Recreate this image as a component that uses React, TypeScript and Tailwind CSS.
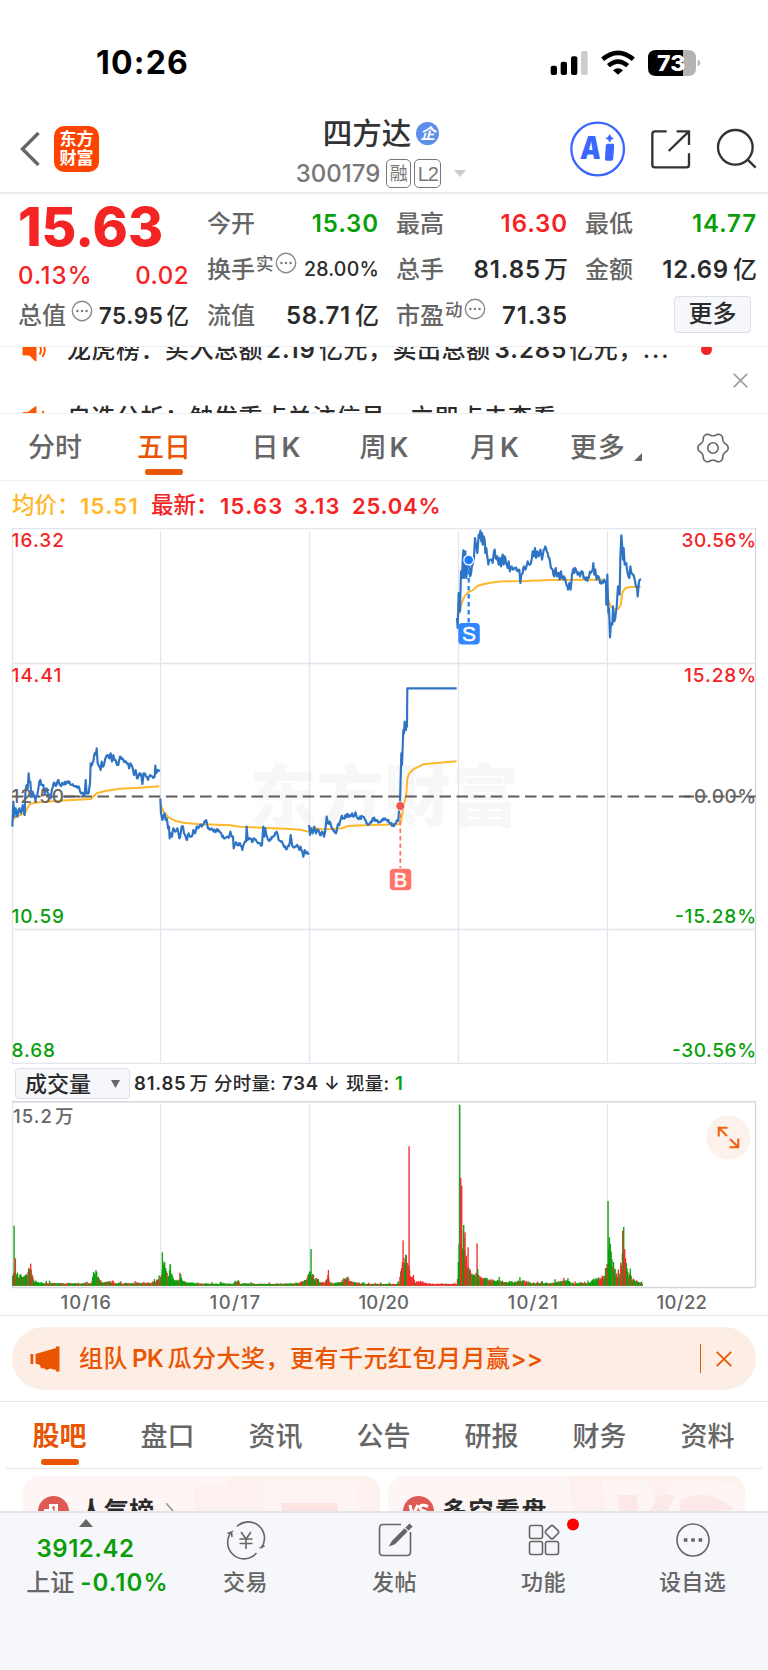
import type { ReactNode } from "react";

type Pt = [number, number];

const parse = (s: string): Pt[] =>
  s.trim().split(/\s+/).map((p) => p.split(",").map(Number) as Pt);

const makeRandom = (seed: number) => () => {
  seed = (seed * 1664525 + 1013904223) % 4294967296;
  return seed / 4294967296;
};

/* Price series: one string of x,y pairs per trading day, in thirds of a pixel. */
const priceDays = [
  "37,1040 40,965 43,1010 47,985 52,1010 58,985 63,1000 68,975 74,1005 76,940 80,915 83,925 86,880 88,905 91,905 94,950 98,935 102,945 106,960 112,945 118,905 121,900 124,915 130,915 134,940 140,925 146,945 152,955 157,925 163,908 167,918 172,905 175,900 180,915 190,912 200,908 208,905 216,915 228,920 238,925 243,940 250,945 254,945 257,900 260,940 266,940 270,910 272,850 276,855 280,845 284,820 288,825 290,805 293,850 298,860 302,870 305,845 309,860 313,850 316,835 323,825 328,835 332,820 336,845 340,825 343,840 355,855 360,830 370,840 378,845 383,850 387,865 391,850 398,865 402,885 407,870 411,895 418,880 424,885 427,912 431,880 440,890 444,900 450,885 458,890 464,890 466,857 468,880 475,870 479,870",
  "481,955 483,1000 487,1020 490,1010 494,1000 497,1020 500,1015 504,1045 507,1040 509,1075 513,1060 516,1070 520,1045 526,1055 532,1045 538,1075 542,1060 545,1040 549,1040 552,1060 557,1070 561,1080 566,1060 570,1070 575,1070 580,1050 585,1060 590,1040 595,1045 600,1035 605,1040 612,1030 618,1020 624,1045 635,1045 645,1055 655,1050 665,1065 675,1075 682,1070 688,1070 691,1055 696,1070 699,1070 701,1105 706,1090 712,1095 720,1090 727,1110 732,1090 738,1085 740,1040 743,1080 750,1075 758,1085 763,1075 770,1085 780,1090 786,1095 790,1040 793,1070 796,1045 799,1065 806,1080 812,1075 820,1070 830,1055 836,1080 843,1085 850,1095 857,1105 863,1100 869,1090 872,1065 876,1095 885,1100 892,1095 898,1110 902,1100 907,1115 910,1130 914,1110 918,1120 926,1118",
  "927,1035 930,1065 933,1045 938,1060 943,1040 948,1060 955,1050 960,1065 966,1055 972,1070 976,1050 980,1010 984,1030 990,1025 996,1045 1002,1055 1008,1060 1013,1035 1018,1035 1024,1010 1030,1015 1040,1005 1050,1010 1056,1000 1061,1010 1066,997 1070,1010 1078,1015 1087,1010 1095,1020 1103,1035 1110,1030 1118,1015 1127,1020 1135,1028 1145,1020 1155,1015 1160,1020 1165,1020 1172,1030 1180,1035 1186,1030 1192,1020 1195,1025",
  "1371,414 1373,444 1376,339 1380,394 1383,274 1386,294 1388,244 1390,211 1392,294 1396,214 1399,294 1402,254 1406,244 1410,289 1414,274 1418,254 1422,234 1425,174 1428,194 1432,219 1436,164 1439,174 1441,152 1444,184 1446,159 1448,194 1451,169 1454,179 1456,219 1459,204 1461,224 1465,254 1471,239 1478,249 1484,209 1487,234 1492,229 1496,254 1499,234 1503,259 1508,224 1511,254 1514,229 1518,249 1523,264 1526,244 1530,274 1535,259 1540,269 1546,264 1553,269 1558,269 1561,309 1564,284 1568,279 1572,259 1578,264 1583,244 1588,254 1593,249 1598,214 1602,229 1605,204 1608,234 1612,214 1616,229 1621,209 1626,239 1631,209 1638,204 1643,219 1648,234 1653,264 1658,269 1663,289 1667,264 1671,289 1676,279 1679,299 1683,274 1686,294 1692,289 1698,309 1704,329 1708,309 1712,329 1716,284 1719,269 1723,279 1726,264 1733,284 1740,289 1746,274 1751,294 1758,299 1766,294 1772,279 1778,269 1780,249 1783,284 1786,269 1790,299 1795,289 1800,309 1806,304 1813,299 1817,302",
  "1818,304 1819,374 1822,284 1825,399 1827,384 1830,472 1833,429 1837,434 1839,379 1843,424 1846,414 1850,384 1854,319 1856,324 1859,344 1861,234 1864,166 1867,204 1869,239 1871,204 1874,254 1879,249 1883,279 1888,294 1891,259 1894,279 1898,284 1903,294 1908,319 1911,319 1913,349 1917,304 1920,299 1923,297",
].map(parse);

const limitUp = parse("1195,1025 1198,978 1200,970 1204,820 1206,855 1210,750 1212,760 1214,725 1218,750 1219,730 1221,740 1222,625 1370,625");

const averageDays = [
  "37,1020 48,1010 65,1004 75,1000 82,985 90,972 105,968 130,966 200,961 273,957 290,940 320,932 360,926 420,923 478,919",
  "481,970 490,995 505,1012 525,1022 550,1028 590,1032 650,1034 690,1036 720,1040 800,1044 860,1046 900,1049 926,1055",
  "927,1042 960,1047 985,1048 1025,1045 1045,1038 1090,1036 1152,1034 1195,1033 1202,1028 1208,995 1219,940 1222,895 1228,880 1240,868 1262,857 1270,853 1310,849 1370,844",
  "1371,405 1378,400 1385,370 1393,350 1403,338 1422,328 1432,318 1452,312 1480,307 1512,304 1580,303 1650,300 1700,300 1760,299 1815,299",
  "1820,330 1825,362 1833,380 1845,388 1855,386 1862,375 1868,335 1876,325 1890,321 1922,321",
].map(parse);

const line = (pts: Pt[]) => pts.map((p) => p.join(",")).join(" ");

const roughen = (pts: Pt[], amp: number, seed: number): Pt[] => {
  const rnd = makeRandom(seed);
  const out: Pt[] = [];
  pts.forEach((p, i) => {
    out.push(p);
    const n = pts[i + 1];
    if (!n) return;
    const steps = Math.floor((n[0] - p[0]) / 2);
    for (let k = 1; k < steps; k++) {
      const t = k / steps;
      out.push([p[0] + (n[0] - p[0]) * t, p[1] + (n[1] - p[1]) * t + (rnd() - 0.5) * 2 * amp]);
    }
  });
  return out;
};

/* Volume profile: x,height pairs in thirds of a pixel, with single tall bars on top. */
const volumeProfile = parse(
  "38,38 45,42 55,35 70,28 80,35 90,62 100,20 110,13 130,8 180,8 240,7 275,8 280,52 290,42 300,17 310,10 330,14 345,7 460,9 470,15 475,25 485,32 490,75 497,55 505,25 511,60 518,25 530,16 545,24 555,11 600,7 700,6 707,17 720,7 800,6 880,7 905,14 920,22 928,42 935,37 945,24 960,13 975,10 985,40 990,9 1020,10 1030,20 1043,32 1050,13 1070,10 1100,6 1190,5 1198,10 1203,55 1212,85 1217,90 1225,60 1232,40 1245,14 1270,12 1290,6 1360,5 1372,8 1376,150 1385,170 1395,115 1402,60 1412,45 1425,38 1440,27 1460,23 1480,19 1520,12 1570,15 1600,8 1650,8 1700,16 1720,8 1770,10 1785,22 1805,27 1815,38 1822,90 1828,130 1838,85 1848,42 1856,25 1862,70 1870,115 1880,60 1890,30 1910,15 1926,8 1940,4"
);
const spikes: [number, number, boolean][] = [
  [42, 180, false], [46, 82, true], [92, 66, true], [487, 100, false], [492, 72, false], [511, 62, false], [933, 110, false], [985, 47, true],
  [1209, 136, true], [1217, 93, false], [1227, 418, true], [1379, 543, false], [1382, 323, true], [1385, 300, true],
  [1391, 182, false], [1395, 160, true], [1404, 115, true], [1431, 127, true], [1433, 50, false], [1824, 254, false], [1828, 145, false], [1868, 165, true], [1871, 176, false], [1874, 110, true],
];

const redShare = (x: number) => {
  if (x < 480) return 0.42;
  if (x < 925) return 0.22;
  if (x < 1225) return 0.45;
  if (x < 1372) return 0.96;
  return 0.3;
};

const volumeBars = (() => {
  const rnd = makeRandom(77);
  const bars: { x: number; h: number; red: boolean }[] = [];
  for (let x = 38; x <= 1928; x += 2.4) {
    const i = Math.max(1, volumeProfile.findIndex((p) => p[0] >= x));
    const a = volumeProfile[i - 1];
    const b = volumeProfile[i];
    const base = a[1] + ((b[1] - a[1]) * (x - a[0])) / (b[0] - a[0]);
    const jump = rnd() > 0.93 ? 1.7 : 1;
    bars.push({ x, h: Math.max(5, base * (0.65 + rnd() * 0.45) * (base < 30 ? jump : 1)), red: rnd() < redShare(x) });
  }
  spikes.forEach(([x, h, red]) => bars.push({ x, h, red }));
  return bars;
})();

const gearOutline = Array.from({ length: 120 }, (_, i) => {
  const a = (i / 120) * Math.PI * 2;
  const c = Math.cos(6 * a);
  const r = 13.7 + 1.45 * Math.sign(c) * Math.abs(c) ** 0.7;
  return `${(16 + r * Math.cos(a)).toFixed(2)},${(16 + r * Math.sin(a)).toFixed(2)}`;
}).join(" ");

const Dots = ({ className = "" }: { className?: string }) => (
  <svg className={`size-[22px] shrink-0 ${className}`} viewBox="0 0 22 22">
    <circle cx="11" cy="11" r="9.7" fill="none" stroke="#8a8a8a" strokeWidth="1.4" />
    <circle cx="6.4" cy="11" r="1.2" fill="#777" />
    <circle cx="11" cy="11" r="1.2" fill="#777" />
    <circle cx="15.6" cy="11" r="1.2" fill="#777" />
  </svg>
);

const Speaker = () => (
  <svg className="h-6 w-6 shrink-0" viewBox="0 0 24 24">
    <path d="M2 6h4l7-5.500q1.500-1 1.500 1v20.500q0 2-1.500 1L7.500 17.500H2q-1.500 0-1.500-1.500V7.500Q.5 6 2 6Z" fill="#ff5500" />
    <path d="M17.500 7.500q3 4.500 0 9M20.500 5q4.500 7 0 14" fill="none" stroke="#ff5500" strokeWidth="1.900" />
  </svg>
);

const Cross = ({ className }: { className: string }) => (
  <svg className={className} viewBox="0 0 16 16" fill="none" stroke="currentColor" strokeWidth="1.800">
    <path d="M.8.8l14.400 14.400M15.200.8.8 15.200" />
  </svg>
);

const Cell = ({ label, children }: { label: ReactNode; children?: ReactNode }) => (
  <div className="-mr-[2px] flex h-[46px] items-center justify-between text-[24px]">
    <span className="flex text-[#666]">{label}</span>
    {children}
  </div>
);

const StatusBar = () => (
  <div className="flex h-[100px] items-center justify-between pl-[96px] pr-[67px] pt-[26px]">
    <span className="text-[32px] font-bold tracking-[1.2px] text-black">10:26</span>
    <svg className="h-7 w-[151px]" viewBox="498 84 453 84">
      <rect x="500" y="134" width="19" height="28" rx="6" />
      <rect x="530" y="122" width="19" height="40" rx="6" />
      <rect x="561" y="106" width="19" height="56" rx="6" />
      <rect x="591" y="90" width="20" height="72" rx="6" fill="#ccc" />
      <path d="M656 115Q702 76 748 115" fill="none" stroke="#000" strokeWidth="14" />
      <path d="M673 134Q702 109 731 134" fill="none" stroke="#000" strokeWidth="13" />
      <path d="M687 148Q702 136 717 148L702 161Z" />
      <path d="M897 87h15q24 0 24 24v30q0 24-24 24h-15Z" fill="#b3b3b3" />
      <path d="M897 87h-81q-24 0-24 24v30q0 24 24 24h81Z" />
      <path d="M941 116q8 3 8 10t-8 10Z" fill="#b3b3b3" />
      <text x="819" y="149.500" fontSize="66" fontWeight="800" fill="#fff" textLength="85" lengthAdjust="spacingAndGlyphs">73</text>
    </svg>
  </div>
);

const Header = () => (
  <header className="grid h-[94px] grid-cols-[1fr_auto_1fr] items-center border-b-2 border-[#ebebeb]">
    <div className="flex items-center pl-5 pt-[6px]">
      <svg className="h-9 w-5" viewBox="0 0 20 36" fill="none" stroke="#666" strokeWidth="3.400">
        <path d="M18.500 2 2.500 18l16 16" />
      </svg>
      <div className="ml-[14px] flex h-[46px] w-[45px] flex-col items-center justify-center rounded-[10px] bg-[#ff4400] text-[17px] font-bold leading-[19px] text-white">
        <span>东方</span>
        <span>财富</span>
      </div>
    </div>
    <div className="mr-[4px] flex w-[172px] flex-col items-center pr-[2px] pt-[13px]">
      <div className="flex h-9 items-center gap-[5px]">
        <span className="text-[29.500px] text-[#333]">四方达</span>
        <span className="flex size-[23px] items-center justify-center rounded-full bg-[#5f8fea] text-[15px] font-bold italic text-white">企</span>
      </div>
      <div className="mt-[6px] flex h-8 items-center text-[#777]">
        <span className="text-[24px]">300179</span>
        <span className="ml-[6px] flex h-[29px] w-[25px] items-center justify-center rounded-[5px] border border-[#777] text-[18px] font-normal">融</span>
        <span className="ml-[3px] flex h-[29px] w-[27px] items-center justify-center rounded-[5px] border border-[#777] font-['Liberation_Sans'] text-[20px] font-normal tracking-[-1px]">L2</span>
        <svg className="ml-[13px] h-[7px] w-3" viewBox="0 0 12 7"><path d="M0 0h12L6 7Z" fill="#ccc" /></svg>
      </div>
    </div>
    <svg className="mr-[9px] mt-[6px] h-14 w-[190px] justify-self-end" viewBox="555 305 570 168" fill="none" stroke="#333" strokeWidth="7">
      <circle cx="641" cy="389" r="79" stroke="#3b66ff" />
      <g transform="skewX(-4) translate(28 0)" stroke="none" fill="#3b66ff">
        <text x="589" y="420" fontSize="95" fontWeight="900" textLength="62" lengthAdjust="spacingAndGlyphs">A</text>
        <path d="M664 378q0-5 5-5h15q5 0 5 5v40q0 6-6 6h-13q-6 0-6-6Z" />
      </g>
      <path d="M677 344q3 10 13 13-10 3-13 13-3-10-13-13 10-3 13-13Z" fill="#3b66ff" stroke="none" />
      <path d="M848 336H813q-8 0-8 8v92q0 8 8 8h94q8 0 8-8V402M878 336h37v41M915 336l-61 59" />
      <circle cx="1054" cy="384" r="52" />
      <path d="M1090 420l25 25" />
    </svg>
  </header>
);

const Quote = () => (
  <section className="grid h-[153px] grid-cols-4 gap-x-[19px] border-b border-[#efefef] pl-[18px] pr-[13px] pt-[7px] text-[#2b2b2b]">
    <div>
      <div className="flex h-[52px] items-center text-[53.500px] font-extrabold text-[#f52424]">15.63</div>
      <div className="-mr-px flex h-[46px] items-center justify-between text-[24px] text-[#f52424]">
        <span className="tracking-[1.200px]">0.13%</span>
        <span className="tracking-[0.500px]">0.02</span>
      </div>
      <div className="-mr-px flex h-[34px] items-center text-[24px]">
        <span className="text-[#666]">总值</span>
        <Dots className="mb-[10px] ml-[5px]" />
        <span className="ml-auto whitespace-nowrap text-[22.500px] font-[560] tracking-[0.600px]">75.95<span className="ml-[3px] font-medium tracking-normal">亿</span></span>
      </div>
    </div>
    <div>
      <Cell label="今开"><span className="font-[560] tracking-[0.900px] text-[#0a9f0a]">15.30</span></Cell>
      <Cell label={<>换手<span className="-mt-[3px] ml-px text-[17.500px]">实</span><Dots className="-mt-[6px] ml-px" /></>}>
        <span className="text-[19.500px] tracking-[0.200px]">28.00%</span>
      </Cell>
      <Cell label="流值"><span className="font-[560] tracking-[0.800px]">58.71<span className="ml-1 font-medium tracking-normal">亿</span></span></Cell>
    </div>
    <div>
      <Cell label="最高"><span className="font-[560] tracking-[0.900px] text-[#f52424]">16.30</span></Cell>
      <Cell label="总手"><span className="font-[560] tracking-[0.900px]">81.85<span className="ml-[3px] font-medium tracking-normal">万</span></span></Cell>
      <Cell label={<>市盈<span className="-mt-[3px] ml-px text-[17.500px]">动</span><Dots className="-mt-[6px] ml-px" /></>}>
        <span className="font-[560] tracking-[0.900px]">71.35</span>
      </Cell>
    </div>
    <div>
      <Cell label="最低"><span className="font-[560] tracking-[0.900px] text-[#0a9f0a]">14.77</span></Cell>
      <Cell label="金额"><span className="font-[560] tracking-[0.800px]">12.69<span className="ml-1 font-medium tracking-normal">亿</span></span></Cell>
      <div className="flex h-[42px] items-center justify-end pr-[4px]">
        <button className="h-[37px] w-[77px] rounded-[4px] border border-[#dcdfe6] bg-[#f6f7fa] text-[24px]">更多</button>
      </div>
    </div>
  </section>
);

const News = () => (
  <section className="flex h-[67px] overflow-hidden border-b border-[#efefef]">
    <div className="-mt-[31px] w-[680px] shrink-0 pl-[22px] text-[24px] tracking-[0.500px] text-[#2b2b2b]">
      <div className="flex h-[68px] items-center">
        <Speaker />
        <span className="ml-[21px] whitespace-nowrap">龙虎榜：买入总额<span className="mx-[3px] font-[560] tracking-[1px]">2.19</span>亿元，卖出总额<span className="ml-[4px] mr-[2px] font-[560] tracking-[1px]">3.285</span>亿元，<span className="tracking-[2px]">...</span></span>
      </div>
      <div className="flex h-[68px] items-center">
        <Speaker />
        <span className="ml-[21px] whitespace-nowrap">自选分析：触发重点关注信号，立即点击查看</span>
      </div>
    </div>
    <div className="flex flex-col pl-[21px]">
      <span className="-mt-[3px] size-[11px] rounded-full bg-[#f52424]" />
      <Cross className="ml-[32px] mt-[18px] size-[15px] text-[#999]" />
    </div>
  </section>
);

const periods = ["分时", "五日", "日K", "周K", "月K"];

const PeriodTabs = () => (
  <nav className="grid h-[67px] grid-cols-[110px_107px_118px_98px_123px_94px_118px] border-b border-[#f0f0f0] text-[27px] text-[#666]">
    {periods.map((p, i) => (
      <div key={p} className={i === 1 ? "flex flex-col items-center pl-px text-[#ea5504]" : "flex flex-col items-center"}>
        <span className="flex h-[55px] items-center pt-[12px]">
          {p.endsWith("K") ? <>{p[0]}<span className="ml-[3px] font-[560]">K</span></> : p}
        </span>
        {i === 1 && <span className="h-[6px] w-[38px] rounded-full bg-[#ea5504]" />}
      </div>
    ))}
    <div className="flex h-[55px] items-center pl-[14px] pt-[12px]">
      <span className="tracking-[0.700px]">更多</span>
      <svg className="ml-[9px] mt-[18px] size-2" viewBox="0 0 8 8"><path d="M8 0v8H0Z" fill="#666" /></svg>
    </div>
    <div className="flex h-[67px] items-center justify-center pl-[8px]">
      <svg className="size-8" viewBox="0 0 32 32" fill="none" stroke="#666" strokeWidth="1.600">
        <polygon points={gearOutline} />
        <circle cx="16" cy="16" r="5.200" />
      </svg>
    </div>
  </nav>
);

const Legend = () => (
  <div className="flex h-[47px] items-center whitespace-nowrap pl-[12px] pt-[2px] text-[22px] text-[#f52424]">
    <span className="w-[68px] text-[22.500px] text-[#ffb72b]">均价：</span>
    <span className="w-[71px] font-[560] tracking-[1.300px] text-[#ffb72b]">15.51</span>
    <span className="w-[69px] text-[22.500px]">最新：</span>
    <span className="w-[74px] font-[560] tracking-[1.300px]">15.63</span>
    <span className="w-[58px] font-[560] tracking-[1.200px]">3.13</span>
    <span className="font-[560] tracking-[0.800px]">25.04%</span>
  </div>
);

const PriceChart = () => (
  <svg className="h-[536px] w-[768px] shrink-0" viewBox="0 528 768 536" fontSize="19" fontWeight="530">
    <text x="250" y="821" fontSize="67" fontWeight="900" fill="#f7f7f7" textLength="268">东方财富</text>
    <g stroke="#e2e4ee" strokeWidth="1.300" fill="none">
      <path d="M12 528.600H755.500M12 663.500H755.500M12 929.500H755.500M12 1063.500H755.500M12.500 528V1064M160.500 531V1062M309.500 531V1062M458.500 531V1062M607.500 531V1062" />
      <path d="M755.500 528V1064" stroke="#d2d5df" />
    </g>
    <g fill="#f52424">
      <text x="11.500" y="547" textLength="52.500">16.32</text>
      <text x="11.500" y="681.500" textLength="50">14.41</text>
      <text x="681.500" y="547" textLength="74.500">30.56%</text>
      <text x="684" y="681.500" textLength="72">15.28%</text>
    </g>
    <g fill="#0a9f0a">
      <text x="11.500" y="923.300" textLength="52.500">10.59</text>
      <text x="11.500" y="1057" textLength="43.500">8.68</text>
      <text x="675" y="923.300" textLength="81">-15.28%</text>
      <text x="672" y="1057" textLength="84">-30.56%</text>
    </g>
    <g transform="translate(0 480) scale(.33333)" fill="none" strokeLinejoin="round">
      {averageDays.map((d, i) => (
        <polyline key={i} points={line(d)} stroke="#ffb72b" strokeWidth="6" />
      ))}
    </g>
    <path d="M12 796.500H755.500" stroke="#5c5c5c" strokeWidth="2" strokeDasharray="11.500 5.600" />
    <path d="M64 796.500H80M684 796.500H694" stroke="#5c5c5c" strokeWidth="2" />
    <g transform="translate(0 480) scale(.33333)" fill="none" strokeLinejoin="round" stroke="#2f74c4" strokeWidth="6.500">
      {priceDays.map((d, i) => (
        <polyline key={i} points={line(roughen(d, i === 3 ? 9 : i === 4 ? 6 : 5, 11 + i))} />
      ))}
      <polyline points={line(limitUp)} />
    </g>
    <g fill="#666">
      <text x="11.500" y="802.500" textLength="52.500">12.50</text>
      <text x="694" y="802.500" textLength="62">0.00%</text>
    </g>
    <path d="M400.300 806V868" stroke="#ff7468" strokeWidth="1.800" strokeDasharray="4.500 3" />
    <circle cx="400.300" cy="806" r="4.500" fill="#f5564a" stroke="#fff" strokeWidth=".8" />
    <rect x="389.800" y="868.700" width="21.500" height="21.500" rx="4" fill="#ff7468" />
    <text x="400.500" y="886.500" textAnchor="middle" fontSize="20" fill="#fff" stroke="#fff" strokeWidth=".5" fontFamily="Liberation Sans" fontWeight="400">B</text>
    <path d="M468.700 562V623" stroke="#2a82ff" strokeWidth="2.400" strokeDasharray="4.500 3.500" />
    <circle cx="468.700" cy="560" r="4.900" fill="#1c7aff" stroke="#fff" strokeWidth="1.200" />
    <rect x="458.300" y="623" width="21.500" height="21.500" rx="4" fill="#2f86ff" />
    <text x="469" y="641" textAnchor="middle" fontSize="21" fill="#fff" stroke="#fff" strokeWidth=".5" fontFamily="Liberation Sans" fontWeight="400">S</text>
  </svg>
);

const VolumeRow = () => (
  <div className="flex h-[37px] items-center whitespace-nowrap pl-[15px] pt-[2px] text-[18.500px] text-[#2b2b2b]">
    <button className="flex h-[31px] w-[115px] items-center justify-between rounded-[4px] border border-[#dde0e8] bg-[#f6f7fa] pl-[9px] pr-[9px] text-[22px]">
      <span>成交量</span>
      <svg className="h-2 w-[9px]" viewBox="0 0 9 8"><path d="M0 0h9L4.500 8Z" fill="#666" /></svg>
    </button>
    <span className="ml-[4px] w-[80px] font-[560] tracking-[0.800px]">81.85<span className="ml-[3px] font-medium tracking-normal">万</span></span>
    <span className="w-[68px] tracking-[0.200px]">分时量:</span>
    <span className="w-[42px] font-[560] tracking-[0.800px]">734</span>
    <span className="w-[22px]">↓</span>
    <span className="w-[49px] tracking-[0.200px]">现量:</span>
    <span className="font-[560] text-[#0a9f0a]">1</span>
  </div>
);

const dates: [string, number][] = [["10/16", 85.5], ["10/17", 234.5], ["10/20", 383.5], ["10/21", 532.5], ["10/22", 681.5]];

const VolumeChart = () => (
  <div className="h-[215px] shrink-0 border-b border-[#e6e6e6]">
    <svg className="block h-[214px] w-[768px]" viewBox="0 1101 768 214" fontSize="18.500" fontWeight="530" fill="#666">
      <g stroke="#e2e4ee" strokeWidth="1.300" fill="none">
        <path d="M12.500 1101V1287M160.500 1104V1285M309.500 1104V1285M458.500 1104V1285M607.500 1104V1285" />
        <path d="M12 1101.700H755.500V1287M12 1287.500H755.500" stroke="#d5d7de" strokeWidth="1.400" />
      </g>
      <text x="13" y="1122.500" textLength="39">15.2</text>
      <text x="55" y="1122.500" fontWeight="500">万</text>
      <g transform="translate(0 880) scale(.33333)">
        <rect x="36" y="1212" width="1893" height="5" fill="#0a9f0a" opacity=".75" />
        {volumeBars.map((b, i) => (
          <rect key={i} x={b.x - 1.8} y={1217 - b.h} width="4" height={b.h} fill={b.red ? "#f52a2a" : "#0a9f0a"} />
        ))}
      </g>
      {dates.map(([d, x]) => (
        <text key={d} x={x - 25} y="1308.500" textLength="50.500">{d}</text>
      ))}
      <circle cx="728.300" cy="1137.500" r="22" fill="#fdf1eb" />
      <path d="M727 1136l-8-8M718.700 1136.500V1127.700H727.500M730 1139l8 8M738.300 1138.500V1147.300H729.500" fill="none" stroke="#f0600c" strokeWidth="2" />
    </svg>
  </div>
);

const Banner = () => (
  <div className="h-[86px] border-b border-[#e6e6e6] px-3 pt-[11px]">
    <div className="flex h-[63px] items-center rounded-full bg-[#fdeee5] pl-[18px] pr-[24px] text-[24px] text-[#ea5504]">
      <svg className="h-[26px] w-[30px]" viewBox="0 0 30 26" fill="#ea5504">
        <path d="M.5 8h2.800v10H.5ZM5.500 8 26 2V.500h3.500v25H26V24L20 22.500l-3 1.500-4-2-2 .5-1-3.500-4.500-1.500Z" />
      </svg>
      <span className="ml-[19px] whitespace-nowrap tracking-[0.500px]">组队<span className="ml-[4px] mr-[4px] font-[560] tracking-[-0.400px]">PK</span>瓜分大奖，更有千元红包月月赢<span className="font-[560] tracking-[0px]">&gt;&gt;</span></span>
      <span className="ml-auto h-[29px] w-px bg-[#ea5504]" />
      <Cross className="ml-[15px] size-4" />
    </div>
  </div>
);

const sections = ["股吧", "盘口", "资讯", "公告", "研报", "财务", "资料"];

const SectionTabs = () => (
  <nav className="mx-[6px] grid h-[67px] grid-cols-7 border-b border-[#e6e6e6] text-[27px] text-[#666]">
    {sections.map((s, i) => (
      <div key={s} className={i === 0 ? "-ml-px flex flex-col items-center font-bold text-[#ea5504]" : "-ml-px flex flex-col items-center"}>
        <span className="flex h-[57px] items-center pt-[12px]">{s}</span>
        {i === 0 && <span className="h-[6px] w-[38px] rounded-full bg-[#ea5504]" />}
      </div>
    ))}
  </nav>
);

const Cards = () => (
  <div className="flex h-[42px] gap-2 overflow-hidden pl-[23px] pt-[7px] text-[25px] font-bold text-[#2b2b2b]">
    <div className="relative flex h-[70px] w-[357px] items-center overflow-hidden rounded-[16px] bg-[#fef6f4] pl-[15px]">
      <svg className="absolute right-0 top-0 h-[70px] w-[190px]" viewBox="0 0 190 70">
        <path d="M4 10H37V0H190V70H4Z" fill="#fdf2f0" />
        <path d="M75 5H167V70H75Z" fill="#fef5f3" />
        <path d="M92 27H148V70H92Z" fill="#fce3e1" />
      </svg>
      <svg className="relative size-[31px]" viewBox="0 0 31 31">
        <circle cx="15.500" cy="15.500" r="15.500" fill="#df5a55" />
        <path d="M6 13h5V8h9v7h5v9H6Z" fill="#fff" />
        <path d="M14 12l2-1v5" fill="none" stroke="#df5a55" strokeWidth="1.400" />
      </svg>
      <span className="relative ml-[10px]">人气榜</span>
      <svg className="relative ml-[12px] h-4 w-2" viewBox="0 0 8 16" fill="none" stroke="#999" strokeWidth="1.600"><path d="M0 0l7 8-7 8" /></svg>
    </div>
    <div className="relative flex h-[70px] w-[357px] items-center overflow-hidden rounded-[16px] bg-[#fef6f4] pl-[15px]">
      <svg className="absolute right-0 top-0 h-[70px] w-[176px]" viewBox="0 0 176 70">
        <path d="M0 0H176V70H8Z" fill="#fdf0ee" />
        <path d="M33 4H78L92 36 104 4H146Q170 6 176 18V70H40Z" fill="#fef6f4" />
        <path d="M49 19H68L70 50H52ZM90 19H106L92 50H72ZM112 24Q140 10 166 34L126 36V50H108Z" fill="#fce8e6" />
      </svg>
      <svg className="relative size-[31px]" viewBox="0 0 31 31">
        <circle cx="15.500" cy="15.500" r="15.500" fill="#df5a55" />
        <path d="M7 9l2.500 11L15 9M25 10.500q-7-3-8 1 0 2.500 4 3.500t2 4-8 1" fill="none" stroke="#fff" strokeWidth="3" />
      </svg>
      <span className="relative ml-[8px] tracking-[1.500px]">多空看盘</span>
    </div>
  </div>
);

const BottomItem = ({ label, children }: { label: string; children: ReactNode }) => (
  <div className="flex flex-col items-center">
    <svg className="mt-[7px] h-10 w-[42px] overflow-visible" viewBox="-21 -20 42 40" fill="none" stroke="#666" strokeWidth="1.600">
      {children}
    </svg>
    <span className="mt-[11px] text-[22px] tracking-[0.400px]">{label}</span>
  </div>
);

const BottomBar = () => (
  <footer className="grid h-[159px] grid-cols-[149px_149px_149px_149px_149px] border-t-2 border-[#e4e5e8] bg-[#f6f7fa] pl-[22px] text-[#666]">
    <div className="flex flex-col items-center text-[24px]">
      <svg className="mr-[22px] mt-[6px] h-[8px] w-[14px]" viewBox="0 0 14 8"><path d="M0 8 7 0l7 8Z" fill="#666" /></svg>
      <span className="mr-[22px] mt-[10px] font-[560] tracking-[0.500px] text-[#0a9f0a]">3912.42</span>
      <span className="ml-[2px] mt-[10px] whitespace-nowrap">上证<span className="ml-[6px] font-[560] tracking-[1.100px] text-[#0a9f0a]">-0.10%</span></span>
    </div>
    <BottomItem label="交易">
      <path d="M-9-13.500A16.200 16.200 0 0 1 15.500 7.500l-2 .300M15.500 7.500l3-2M10.500 13A16.200 16.200 0 0 1-14.500-8l-4 1.500M-14.500-8l.5 5" />
      <path d="M-5-8 0-1 5-8M-6.500-1h13M-6.500 3.500h13M0-1v10" />
    </BottomItem>
    <BottomItem label="发帖">
      <path d="M6-15.500H-12q-3.500 0-3.500 3.500v24q0 3.500 3.500 3.500h24q3.500 0 3.500-3.500V-8" />
      <path d="M-4.500 5-2.500 1.500 9.500-10.500l2 2L-.500 3.500ZM11.500-12.500l3-2.800 2 1.800-3 3Z" fill="#666" />
    </BottomItem>
    <BottomItem label="功能">
      <rect x="-14.500" y="-14.500" width="13" height="13" rx="2" />
      <rect x="-14.500" y="1.500" width="13" height="13" rx="2" />
      <rect x="1.500" y="1.500" width="13" height="13" rx="2" />
      <rect x="2.800" y="-13.200" width="10.500" height="10.500" rx="2" transform="rotate(45 8 -8)" />
      <circle cx="29" cy="-15.500" r="6" fill="#f00" stroke="none" />
    </BottomItem>
    <BottomItem label="设自选">
      <circle r="16" />
      <path d="M-9.200 0h3.600M-1.800 0h3.600M5.600 0h3.600" strokeWidth="3.600" />
    </BottomItem>
  </footer>
);

export default function App() {
  return (
    <div className="flex h-[1670px] w-[768px] flex-col overflow-hidden bg-white font-['Inter','Noto_Sans_CJK_SC',sans-serif] font-medium leading-none [&>*]:shrink-0">
      <StatusBar />
      <Header />
      <Quote />
      <News />
      <PeriodTabs />
      <Legend />
      <PriceChart />
      <VolumeRow />
      <VolumeChart />
      <Banner />
      <SectionTabs />
      <Cards />
      <BottomBar />
    </div>
  );
}
